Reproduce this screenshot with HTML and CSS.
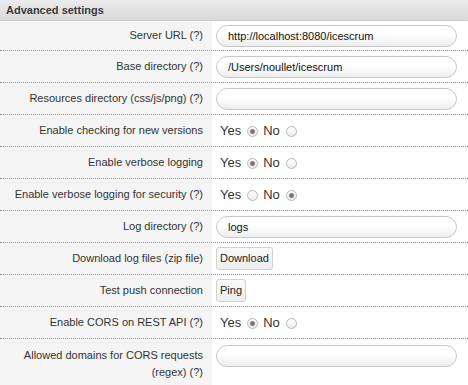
FILE: index.html
```html
<!DOCTYPE html>
<html>
<head>
<meta charset="utf-8">
<link rel="stylesheet" href="styles.css">
</head>
<body>
<div class="panel">
  <div class="panel-head">Advanced settings</div>
  <div class="row first">
    <div class="label">Server URL (?)</div>
    <div class="value"><span class="input">http://localhost:8080/icescrum</span></div>
  </div>
  <div class="row">
    <div class="label">Base directory (?)</div>
    <div class="value"><span class="input">/Users/noullet/icescrum</span></div>
  </div>
  <div class="row">
    <div class="label">Resources directory (css/js/png) (?)</div>
    <div class="value"><span class="input"></span></div>
  </div>
  <div class="row">
    <div class="label">Enable checking for new versions</div>
    <div class="value"><span class="opt">Yes</span><span class="radio on"></span><span class="opt">No</span><span class="radio"></span></div>
  </div>
  <div class="row">
    <div class="label">Enable verbose logging</div>
    <div class="value"><span class="opt">Yes</span><span class="radio on"></span><span class="opt">No</span><span class="radio"></span></div>
  </div>
  <div class="row">
    <div class="label">Enable verbose logging for security (?)</div>
    <div class="value"><span class="opt">Yes</span><span class="radio"></span><span class="opt">No</span><span class="radio on"></span></div>
  </div>
  <div class="row">
    <div class="label">Log directory (?)</div>
    <div class="value"><span class="input">logs</span></div>
  </div>
  <div class="row">
    <div class="label">Download log files (zip file)</div>
    <div class="value"><span class="btn">Download</span></div>
  </div>
  <div class="row">
    <div class="label">Test push connection</div>
    <div class="value"><span class="btn">Ping</span></div>
  </div>
  <div class="row">
    <div class="label">Enable CORS on REST API (?)</div>
    <div class="value"><span class="opt">Yes</span><span class="radio on"></span><span class="opt">No</span><span class="radio"></span></div>
  </div>
  <div class="row last">
    <div class="label wrap">Allowed domains for CORS requests<br>(regex) (?)</div>
    <div class="value"><span class="input"></span></div>
  </div>
</div>
</body>
</html>
```
FILE: styles.css
```css
html, body {
  margin: 0;
  padding: 0;
  background: #fff;
}
body {
  font-family: "Liberation Sans", Arial, Helvetica, sans-serif;
  color: #333;
  width: 468px;
  height: 385px;
  overflow: hidden;
}
.panel-head {
  height: 20px;
  line-height: 21px;
  padding-left: 6px;
  font-size: 11px;
  font-weight: bold;
  color: #3a3a3a;
  background: linear-gradient(#ececec, #d9d9d9);
  border-bottom: 1px solid #cfcfcf;
}
.row {
  display: grid;
  grid-template-columns: 212px 1fr;
  min-height: 31px;
  border-bottom: 1px dotted #8a8a8a;
}
.row.first {
  min-height: 29px;
}
.row.last {
  border-bottom: none;
}
.label {
  background: #f5f5f5;
  display: flex;
  align-items: center;
  justify-content: flex-end;
  text-align: right;
  white-space: nowrap;
  padding: 6px 9px 6px 4px;
  font-size: 11px;
  line-height: 17px;
  color: #333;
}
.label.wrap {
  white-space: normal;
  align-items: flex-start;
  padding-top: 8px;
}
.value {
  display: flex;
  align-items: center;
  padding-left: 4px;
}
.row.last .value {
  align-items: flex-start;
  padding-top: 6px;
}
.input {
  box-sizing: border-box;
  width: 241px;
  height: 22px;
  line-height: 20px;
  border: 1px solid #c8c8c8;
  border-radius: 11px;
  background: linear-gradient(#ffffff 40%, #eeeeee);
  padding-left: 11px;
  font-size: 11px;
  color: #111;
}
.opt {
  font-size: 13px;
  color: #333;
  margin-left: 4px;
}
.radio {
  box-sizing: border-box;
  width: 11px;
  height: 11px;
  border-radius: 50%;
  border: 1px solid #b8b8b8;
  background: linear-gradient(#ffffff, #ebebeb);
  margin: 1px 1px 0 6px;
  display: inline-flex;
  align-items: center;
  justify-content: center;
}
.radio.on::after {
  content: "";
  width: 5px;
  height: 5px;
  border-radius: 50%;
  background: #7a7a7a;
}
.btn {
  box-sizing: border-box;
  height: 23px;
  line-height: 21px;
  padding: 0 3px;
  border: 1px solid #d0d0d0;
  border-radius: 3px;
  background: linear-gradient(#fafafa, #eeeeee);
  font-size: 11px;
  color: #222;
}
```
